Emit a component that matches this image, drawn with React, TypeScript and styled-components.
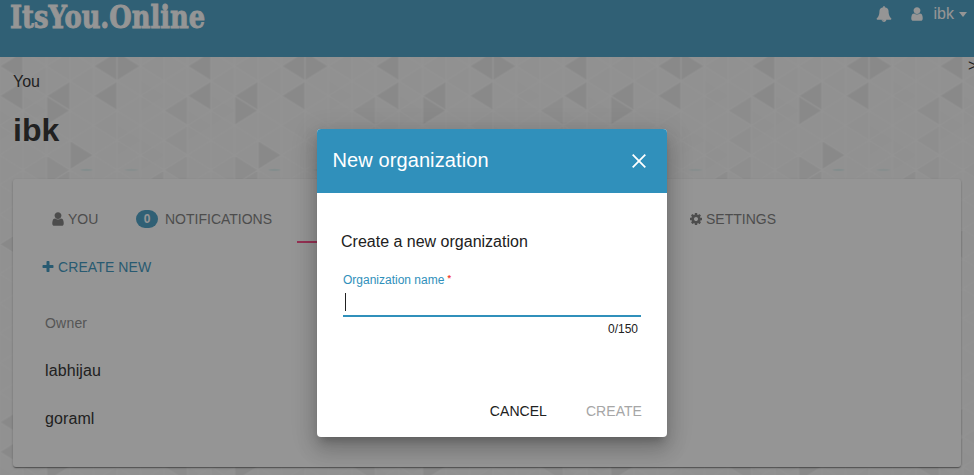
import React from "react";
import styled, { createGlobalStyle } from "styled-components";

const GlobalStyle = createGlobalStyle`
  html, body { margin: 0; height: 100%; overflow: hidden; }
  *, *::before, *::after { box-sizing: border-box; }
  body {
    font-family: "Liberation Sans", Arial, sans-serif;
    font-size: 16px;
    color: #212121;
    background: #f8f8f8;
  }
  h1, h2, p { margin: 0; font-weight: normal; }
  button { font-family: inherit; border: 0; background: none; padding: 0; }
`;

const Page = styled.div`
  position: relative;
  height: 475px;
  overflow: hidden;
`;

const Backdrop = styled.svg`
  position: absolute;
  inset: 0;
`;

const Header = styled.header`
  position: relative;
  display: flex;
  justify-content: space-between;
  height: 57px;
  padding: 0 6px 0 9px;
  background: #3f9ac1;
  color: #fff;
`;

const Logo = styled.svg`
  display: block;
  width: 220px;
  height: 57px;
  overflow: visible;
`;

const UserBar = styled.div`
  display: flex;
  align-items: center;
  height: 27px;
`;

const UserName = styled.span`
  margin: 0 5px 0 9px;
  line-height: 27px;
`;

const Caret = styled.span`
  border: 4.5px solid transparent;
  border-top: 5px solid #fff;
  border-bottom: 0;
  margin: 1px 1px 0 0;
`;

const Glyph = styled.svg<{ $size: number; $gap?: number }>`
  display: block;
  flex: none;
  width: ${(p) => p.$size}px;
  height: ${(p) => p.$size}px;
  margin-right: ${(p) => p.$gap ?? 0}px;
  fill: currentColor;
`;

const Intro = styled.div`
  position: relative;
  height: 122px;
  padding: 15px 13px 0;
`;

const Crumb = styled.p`
  line-height: 20px;
`;

const Title = styled.h1`
  margin-top: 19px;
  font-size: 32px;
  line-height: 38px;
  font-weight: bold;
`;

const Cut = styled.span`
  position: absolute;
  left: 968px;
  top: 0;
  line-height: 18px;
`;

const Card = styled.main`
  position: relative;
  height: 288px;
  margin: 0 13px;
  background: #fff;
  border-radius: 3px;
  box-shadow: 0 1px 3px rgba(0, 0, 0, 0.2), 0 1px 1px rgba(0, 0, 0, 0.2),
    0 2px 1px -1px rgba(0, 0, 0, 0.25);
`;

const Tabs = styled.nav`
  display: grid;
  grid-template-columns: 86px 161px 360px auto;
  height: 64px;
  padding: 16px 0 0 37px;
`;

const Tab = styled.div<{ $active?: boolean; $indent?: number }>`
  display: flex;
  align-items: center;
  height: 48px;
  padding-left: ${(p) => p.$indent ?? 0}px;
  font-size: 14px;
  color: #757575;
  border-bottom: ${(p) => (p.$active ? "2px solid #ff4081" : "0")};
`;

const Badge = styled.span`
  width: 22px;
  margin-right: 7px;
  border-radius: 9px;
  background: #3f9ac1;
  color: #fff;
  font-size: 12px;
  font-weight: bold;
  line-height: 18px;
  text-align: center;
`;

const CreateNew = styled.button`
  display: flex;
  align-items: center;
  height: 48px;
  margin-left: 28px;
  font-size: 14px;
  letter-spacing: 0.1px;
  color: #2f8fba;
`;

const OwnerList = styled.div`
  padding: 20px 32px;
`;

const OwnerHeading = styled.div`
  height: 24px;
  margin-bottom: 12px;
  line-height: 24px;
  font-size: 14px;
  letter-spacing: 0.2px;
  color: #858585;
`;

const OwnerRow = styled.div`
  height: 48px;
  line-height: 48px;
  letter-spacing: 0.1px;
`;

const Scrim = styled.div`
  position: absolute;
  inset: 0;
  display: flex;
  align-items: flex-start;
  justify-content: center;
  padding: 129px 0 0 10px;
  background: rgba(33, 33, 33, 0.48);
`;

const Dialog = styled.section`
  width: 350px;
  height: 308px;
  display: flex;
  flex-direction: column;
  border-radius: 4px;
  overflow: hidden;
  background: #fff;
  box-shadow: 0 7px 8px -4px rgba(0, 0, 0, 0.2),
    0 13px 19px 2px rgba(0, 0, 0, 0.14), 0 5px 24px 4px rgba(0, 0, 0, 0.12);
`;

const DialogHeader = styled.header`
  display: flex;
  align-items: center;
  justify-content: space-between;
  height: 64px;
  padding: 0 21px 0 15.5px;
  background: #3090bb;
  color: #fff;
`;

const DialogTitle = styled.h2`
  padding-bottom: 2px;
  font-size: 20px;
  letter-spacing: 0.1px;
`;

const DialogBody = styled.div`
  flex: 1;
  padding: 39px 26px 0 24px;
`;

const Prompt = styled.p`
  line-height: 20px;
`;

const Field = styled.div`
  margin: 20px 0 0 2px;
`;

const Label = styled.label`
  display: flex;
  height: 16px;
  font-size: 12px;
  line-height: 16px;
  color: #3090bb;
`;

const Required = styled.span`
  margin: -1px 0 0 3px;
  font-size: 9px;
  font-weight: bold;
  line-height: 15px;
  color: #f44336;
`;

const Input = styled.div`
  display: flex;
  align-items: center;
  height: 29px;
  padding-left: 2px;
  border-bottom: 2px solid #3090bb;
`;

const TextCursor = styled.span`
  width: 1px;
  height: 18px;
  margin-top: 1px;
  background: #212121;
`;

const Counter = styled.div`
  padding: 4px 3px 0 0;
  font-size: 12px;
  line-height: 16px;
  text-align: right;
`;

const Actions = styled.footer`
  display: flex;
  justify-content: flex-end;
  gap: 39px;
  height: 52px;
  padding-right: 25px;
`;

const Action = styled.button<{ $disabled?: boolean }>`
  height: 52px;
  font-size: 14px;
  line-height: 52px;
  letter-spacing: 0.05px;
  color: ${(p) => (p.$disabled ? "#a6a6a6" : "#212121")};
`;

const icons = {
  user: "M1536 1399q0 109-62.5 187t-150.5 78h-854q-88 0-150.5-78t-62.5-187q0-85 8.5-160.5t31.5-152 58.5-131 94-89 134.5-34.5q131 128 313 128t313-128q76 0 134.5 34.5t94 89 58.5 131 31.5 152 8.5 160.5zm-256-887q0 159-112.5 271.5t-271.5 112.5-271.5-112.5-112.5-271.5 112.5-271.5 271.5-112.5 271.5 112.5 112.5 271.5z",
  plus: "M1600 736v192q0 40-28 68t-68 28h-416v416q0 40-28 68t-68 28h-192q-40 0-68-28t-28-68v-416h-416q-40 0-68-28t-28-68v-192q0-40 28-68t68-28h416v-416q0-40 28-68t68-28h192q40 0 68 28t28 68v416h416q40 0 68 28t28 68z",
  bell: "M912 1696q0-16-16-16-59 0-101.5-42.5t-42.5-101.5q0-16-16-16t-16 16q0 73 51.5 124.5t124.5 51.5q16 0 16-16zm816-288q0 52-38 90t-90 38h-448q0 106-75 181t-181 75-181-75-75-181h-448q-52 0-90-38t-38-90q50-42 91-88t85-119.5 74.5-158.5 50-206 19.5-260q0-152 117-282.5t307-158.5q-8-19-8-39 0-40 28-68t68-28 68 28 28 68q0 20-8 39 190 28 307 158.5t117 282.5q0 139 19.5 260t50 206 74.5 158.5 85 119.5 91 88z",
  cog: "M1152 896q0-106-75-181t-181-75-181 75-75 181 75 181 181 75 181-75 75-181zm512-109v222q0 12-8 23t-20 13l-185 28q-19 54-39 91 35 50 107 138 10 12 10 25t-9 23q-27 37-99 108t-94 71q-12 0-26-9l-138-108q-44 23-91 38-16 136-29 186-7 28-36 28h-222q-14 0-24.5-8.5t-11.5-21.5l-28-184q-49-16-90-37l-141 107q-10 9-25 9-14 0-25-11-126-114-165-168-7-10-7-23 0-12 8-23 15-21 51-66.5t54-70.5q-27-50-41-99l-183-27q-13-2-21-12.5t-8-23.5v-222q0-12 8-23t19-13l186-28q14-46 39-92-40-57-107-138-10-12-10-24 0-10 9-23 26-36 98.5-107.5t94.5-71.5q13 0 26 10l138 107q44-23 91-38 16-136 29-186 7-28 36-28h222q14 0 24.5 8.5t11.5 21.5l28 184q49 16 90 37l142-107q9-9 24-9 13 0 25 10 129 119 165 170 7 8 7 22 0 12-8 23-15 21-51 66.5t-54 70.5q26 50 41 98l183 28q13 2 21 12.5t8 23.5z",
};

function Icon({ name, size, gap }: { name: keyof typeof icons; size: number; gap?: number }) {
  return (
    <Glyph viewBox="0 0 1792 1792" $size={size} $gap={gap} aria-hidden>
      <path d={icons[name]} />
    </Glyph>
  );
}

const COL = 23.5;
const ROW = 29.67;

const DARK = "#e9e9e9";
const MID = "#eeeeee";
const PALE = "#f5f5f5";

// Shaded triangles: column, tip height in half rows, direction of the tip, shade.
const facets: [number, number, "l" | "r", string][] = [
  [0, 2, "l", DARK], [4, 2, "l", DARK], [5, 2, "r", DARK],
  [0, 4, "l", DARK], [2, 4, "l", DARK], [4, 4, "l", DARK],
  [2, 5, "r", DARK], [7, 5, "l", MID], [7, 7, "l", "#f2f2f2"],
  [3, 8, "r", DARK], [2, 9, "r", MID], [7, 9, "l", "#f1f1f1"],
  [2, 10, "l", MID], [6, 10, "l", MID],
  [0, 14, "l", DARK], [1, 3, "l", PALE], [6, 2, "l", PALE],
  [2, 2, "l", PALE], [6, 4, "r", PALE], [1, 5, "r", PALE],
  [4, 6, "l", PALE], [0, 6, "r", PALE], [5, 7, "r", PALE],
  [1, 9, "l", PALE], [6, 8, "r", PALE], [3, 3, "l", PALE],
];

function TriangleBackdrop() {
  const shapes = facets.map(([c, h, dir, fill], i) => {
    const tip = dir === "l" ? c * COL : (c + 1) * COL;
    const base = dir === "l" ? (c + 1) * COL : c * COL;
    const y = (h * ROW) / 2;
    return (
      <path key={i} fill={fill} d={`M${tip} ${y}L${base} ${y - ROW / 2}V${y + ROW / 2}Z`} />
    );
  });
  let grid = "";
  for (let c = 0; c <= 8; c++) grid += `M${c * COL} 0V${ROW * 12}`;
  for (let r = 0; r <= 12; r++) {
    for (let c = 0; c < 8; c += 2) {
      const x = c * COL;
      const y = r * ROW;
      grid += `M${x} ${y}l${COL} ${ROW / 2}l${COL} ${-ROW / 2}l${-COL} ${-ROW / 2}Z`;
    }
  }
  return (
    <Backdrop width="974" height="475" aria-hidden>
      <defs>
        <pattern id="facets" x="-0.5" y="36.5" width="188" height={ROW * 12} patternUnits="userSpaceOnUse">
          <rect width="188" height={ROW * 12} fill="#f8f8f8" />
          {shapes}
          <path d={grid} fill="none" stroke="#fcfcfc" strokeWidth="1.2" />
          <ellipse cx="87" cy="133.5" rx="6" ry="1" fill="#d9eeee" />
          <ellipse cx="132" cy="133.5" rx="7" ry="1" fill="#e3f1f1" />
        </pattern>
      </defs>
      <rect width="974" height="475" fill="url(#facets)" />
    </Backdrop>
  );
}

export default function App() {
  return (
    <>
      <GlobalStyle />
      <Page>
        <TriangleBackdrop />
        <Header>
          <Logo>
            <text x="1" y="27.5" fill="#fff" stroke="#fff" strokeWidth="0.9" fontFamily="'DejaVu Serif', serif" fontWeight="bold" fontSize="31" textLength="195" lengthAdjust="spacingAndGlyphs">
              ItsYou.Online
            </text>
          </Logo>
          <UserBar>
            <Icon name="bell" size={16} gap={17} />
            <Icon name="user" size={16} />
            <UserName>ibk</UserName>
            <Caret />
          </UserBar>
        </Header>
        <Intro>
          <Cut>&gt;</Cut>
          <Crumb>You</Crumb>
          <Title>ibk</Title>
        </Intro>
        <Card>
          <Tabs>
            <Tab><Icon name="user" size={16} gap={2} />YOU</Tab>
            <Tab><Badge>0</Badge>NOTIFICATIONS</Tab>
            <Tab $active />
            <Tab $indent={32}><Icon name="cog" size={14} gap={3} />SETTINGS</Tab>
          </Tabs>
          <CreateNew><Icon name="plus" size={14} gap={3} />CREATE NEW</CreateNew>
          <OwnerList>
            <OwnerHeading>Owner</OwnerHeading>
            <OwnerRow>labhijau</OwnerRow>
            <OwnerRow>goraml</OwnerRow>
          </OwnerList>
        </Card>
        <Scrim>
          <Dialog role="dialog">
            <DialogHeader>
              <DialogTitle>New organization</DialogTitle>
              <svg width="14" height="14" viewBox="0 0 14 14" stroke="#fff" strokeWidth="1.8" aria-hidden>
                <path d="M.7.7l12.6 12.6M13.3.7L.7 13.3" />
              </svg>
            </DialogHeader>
            <DialogBody>
              <Prompt>Create a new organization</Prompt>
              <Field>
                <Label>Organization name<Required>*</Required></Label>
                <Input><TextCursor /></Input>
                <Counter>0/150</Counter>
              </Field>
            </DialogBody>
            <Actions>
              <Action>CANCEL</Action>
              <Action $disabled>CREATE</Action>
            </Actions>
          </Dialog>
        </Scrim>
      </Page>
    </>
  );
}
